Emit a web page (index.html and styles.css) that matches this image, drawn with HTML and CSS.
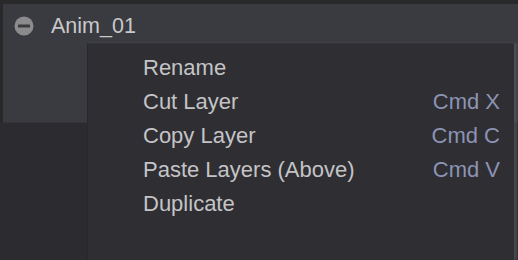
FILE: index.html
```html
<!DOCTYPE html>
<html lang="en">
<head>
    <meta charset="UTF-8">
    <title>Layers</title>
    <link rel="stylesheet" href="styles.css">
</head>
<body>
    <div class="layers">
        <div class="layer">
            <div class="layer-row">
                <svg class="toggle" width="20" height="20" viewBox="0 0 20 20">
                    <circle cx="10" cy="10" r="9.5" fill="#8b8b8d"/>
                    <rect x="4" y="8.5" width="12" height="3" rx="0.6" fill="#3a3b3f"/>
                </svg>
                <span class="layer-name">Anim_01</span>
            </div>
            <div class="layer-body"></div>
        </div>
    </div>
    <ul class="context-menu">
        <li><span>Rename</span></li>
        <li><span>Cut Layer</span><span class="shortcut">Cmd X</span></li>
        <li><span>Copy Layer</span><span class="shortcut">Cmd C</span></li>
        <li><span>Paste Layers (Above)</span><span class="shortcut">Cmd V</span></li>
        <li><span>Duplicate</span></li>
    </ul>
</body>
</html>
```

FILE: styles.css
```css
body {
    margin: 0;
    padding: 0;
    width: 518px;
    height: 260px;
    overflow: hidden;
    background-color: #2c2c30;
    font-family: "Liberation Sans", Arial, sans-serif;
    position: relative;
}
.layers {
    padding-top: 4px;
    background-color: #29292c;
}
.layer {
    margin-left: 3px;
    background-color: #3a3b40;
    border-bottom: 1px solid #333338;
}
.layer-row {
    height: 40px;
    padding-top: 2px;
    display: flex;
    align-items: center;
    padding-left: 11px;
}
.toggle {
    margin-right: 17px;
}
.layer-name {
    color: #c9c9cb;
    font-size: 21.5px;
}
.layer-body {
    height: 76px;
}
.context-menu {
    position: absolute;
    left: 87px;
    top: 43px;
    bottom: 0;
    width: 426px;
    margin: 0;
    padding: 7px 0 0 0;
    list-style: none;
    background-color: #2e2e33;
    border-left: 1px solid #28282b;
    border-top: 1px solid #333337;
    box-shadow: 3px 0 2px rgba(90, 90, 98, 0.6);
}
.context-menu li {
    height: 34px;
    display: flex;
    align-items: center;
    justify-content: space-between;
    padding: 0 14px 0 55px;
    color: #c4c4c6;
    font-size: 22px;
}
.shortcut {
    color: #8c93b3;
}
```
